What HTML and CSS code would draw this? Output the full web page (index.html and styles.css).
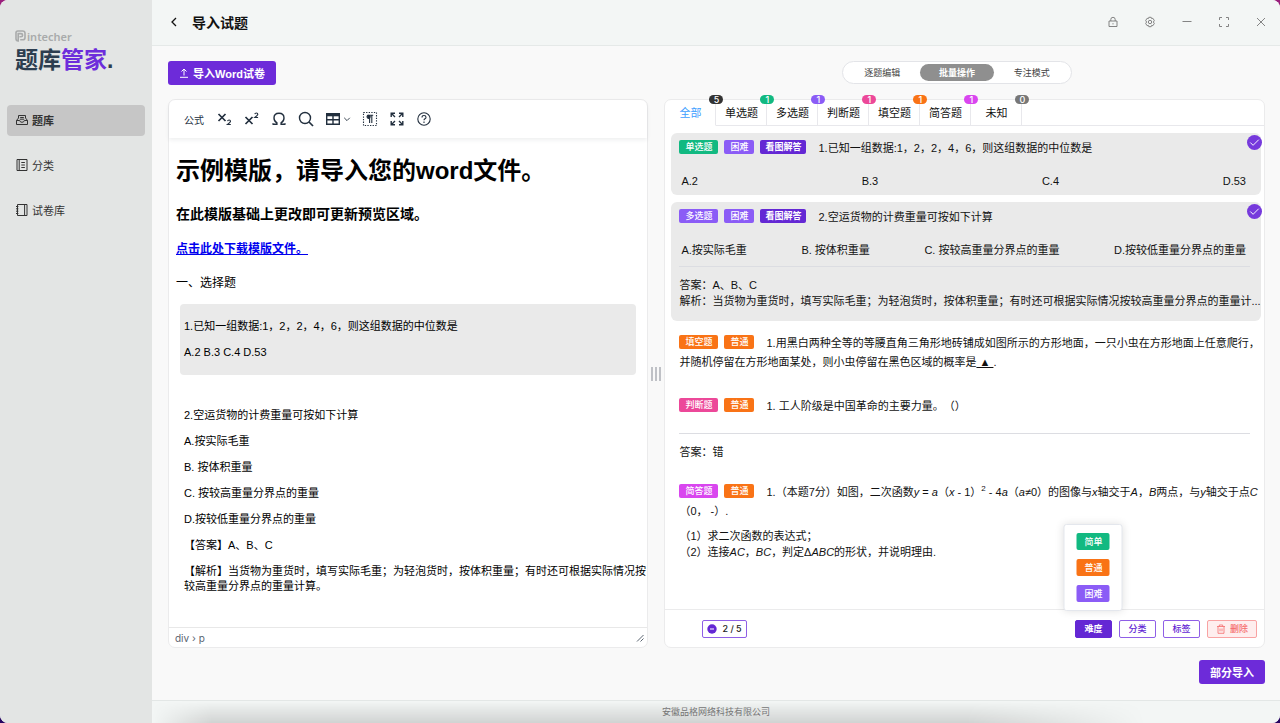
FILE: index.html
```html
<!DOCTYPE html>
<html lang="zh-CN">
<head>
  <meta charset="UTF-8" />
  <meta name="viewport" content="width=device-width, initial-scale=1" />
  <title>题库管家 - 导入试题</title>
  <link rel="stylesheet" href="styles.css">
</head>
<body>
  <div class="app">
    <aside class="sidebar">
      <div class="logo">
        <div class="logo-en">
          <svg width="11" height="12" viewBox="0 0 11 12" fill="none" stroke="currentColor"><path d="M1 3.5V2.8Q1 1 2.8 1H7.6Q10 1 10 3.2V7.4Q10 9.8 7.6 9.8H5.2M1 3.5V8.8Q1 11 3.2 11V3.6H6Q7.6 3.6 7.6 5.2Q7.6 6.8 6 6.8H4.4" stroke-width="1.6"/></svg>
          <span>intecher</span>
        </div>
        <div class="logo-cn">题库<span>管家</span>.</div>
      </div>
      <nav class="menu">
        <a href="#" class="menu-item active">
          <svg viewBox="0 0 14 14"><path d="M1.5 7.5 3.5 5V2.5h7V5l2 2.5v4h-11zM1.5 7.5h3.2q.3 1.8 2.3 1.8t2.3-1.8h3.2M5.2 4.5h3.6M4.8 6.2h4.4"/></svg>
          <span>题库</span>
        </a>
        <a href="#" class="menu-item">
          <svg viewBox="0 0 14 14"><path d="M2 1.5h10v11H2zM4.2 1.5v11M6.3 4.5h3.6M6.3 7h3.6M6.3 9.5h3.6"/></svg>
          <span>分类</span>
        </a>
        <a href="#" class="menu-item">
          <svg viewBox="0 0 14 14"><path d="M2.5 1.5h9.5v11H2.5zM9.6 1.5v11M1 3.5h2.4M1 5.8h2.4M1 8.2h2.4M1 10.5h2.4"/></svg>
          <span>试卷库</span>
        </a>
      </nav>
    </aside>

    <div class="page">
      <header class="header">
        <button class="icon-btn back" aria-label="返回"><svg width="12" height="12" viewBox="0 0 12 12"><path d="M8 2 4 6l4 4"/></svg></button>
        <h1 class="page-title">导入试题</h1>
        <div class="window-btns">
          <button class="icon-btn" aria-label="锁定"><svg width="12" height="12" viewBox="0 0 12 12"><path d="M2 5h8v5.5H2zM3.8 5V3.5a2.2 2.2 0 0 1 4.4 0V5M6 7.2v1.2"/></svg></button>
          <button class="icon-btn" aria-label="设置"><svg width="12" height="12" viewBox="0 0 12 12"><path d="M4.8 1.3h2.4l.4 1.3 1.3-.3 1.4 2.2-.9 1.5.9 1.5-1.4 2.2-1.3-.3-.4 1.3H4.8l-.4-1.3-1.3.3-1.4-2.2.9-1.5-.9-1.5 1.4-2.2 1.3.3z"/><circle cx="6" cy="6" r="1.7"/></svg></button>
          <button class="icon-btn" aria-label="最小化"><svg width="12" height="12" viewBox="0 0 12 12"><path d="M1.5 5.5h9"/></svg></button>
          <button class="icon-btn" aria-label="最大化"><svg width="12" height="12" viewBox="0 0 12 12"><path d="M1.5 4V1.5H4M8 1.5h2.5V4M10.5 8v2.5H8M4 10.5H1.5V8"/></svg></button>
          <button class="icon-btn" aria-label="关闭"><svg width="12" height="12" viewBox="0 0 12 12"><path d="m2 2 8 8M10 2l-8 8"/></svg></button>
        </div>
      </header>

      <main class="main">
        <div class="actions">
          <button class="btn-primary">
            <svg width="10" height="10" viewBox="0 0 10 10"><path d="M5 7.5V1M2.5 3.5 5 1l2.5 2.5M1 9.3h8"/></svg>
            导入Word试卷
          </button>
          <div class="segment">
            <button>逐题编辑</button>
            <button class="on">批量操作</button>
            <button>专注模式</button>
          </div>
        </div>

        <div class="panels">
          <section class="panel editor">
            <div class="editor-bar">
              <button class="formula">公式</button>
              <button aria-label="下标"><svg viewBox="0 0 16 16"><path class="thick" d="m1.5 3 7 7M8.5 3l-7 7"/><path d="M10.5 10.2q.3-1.2 1.6-1.2 1.4 0 1.4 1.2 0 1-3 3.3h3.3"/></svg></button>
              <button aria-label="上标"><svg viewBox="0 0 16 16"><path class="thick" d="m1.5 6 7 7M8.5 6l-7 7"/><path d="M10.8 3.2q.3-1.2 1.6-1.2 1.4 0 1.4 1.2 0 1-3 3.3h3.3"/></svg></button>
              <button aria-label="特殊字符"><svg viewBox="0 0 16 16"><path class="mid" d="M2 13.3h3.9v-1.5Q3 10.3 3 7q0-4.8 5-4.8T13 7q0 3.3-2.9 4.8v1.5H14M2 13.8v-1.6M14 13.8v-1.6"/></svg></button>
              <button aria-label="查找"><svg viewBox="0 0 16 16"><circle class="mid" cx="7" cy="7" r="5.5"/><path class="thick" d="m11 11 4 4"/></svg></button>
              <button class="table-btn" aria-label="表格"><svg viewBox="0 0 16 16"><path class="mid" d="M1.7 2.7h12.6v10.6H1.7zM8 4v9M2 8.7h12"/><path d="M1.5 4h13" stroke-width="2.6"/></svg><svg class="caret" viewBox="0 0 10 10"><path d="m1.5 3.5 3.5 3.5 3.5-3.5"/></svg></button>
              <button aria-label="显示块"><svg viewBox="0 0 16 16"><path d="M1.5 1.5h13v13h-13z" stroke-dasharray="1.3 1.3"/><path d="M7.6 4v8M9.8 4v8M5.4 4.3h5.8"/><circle class="solid" cx="6.6" cy="5.8" r="1.6"/></svg></button>
              <button aria-label="全屏"><svg viewBox="0 0 16 16"><path class="mid" d="M2.2 6V2.2H6M2.5 2.5 6 6M10 2.2h3.8V6M13.5 2.5 10 6M13.8 10v3.8H10M13.5 13.5 10 10M6 13.8H2.2V10M2.5 13.5 6 10"/></svg></button>
              <button aria-label="帮助"><svg viewBox="0 0 16 16"><circle cx="8" cy="8" r="6.2"/><path d="M6 6.4q0-1.9 2-1.9t2 1.7q0 1-1 1.6T8 9.3M8 10.6v1.3"/></svg></button>
            </div>
            <div class="editor-body" contenteditable="true" spellcheck="false">
              <h1>示例模版，请导入您的word文件。</h1>
              <h2>在此模版基础上更改即可更新预览区域。</h2>
              <h3><a href="#">点击此处下载模版文件。</a></h3>
              <p class="section">一、选择题</p>
              <div class="block selected">
                <p>1.已知一组数据:1，2，2，4，6，则这组数据的中位数是</p>
                <p>A.2 B.3 C.4 D.53</p>
              </div>
              <div class="block">
                <p>2.空运货物的计费重量可按如下计算</p>
                <p>A.按实际毛重</p>
                <p>B. 按体积重量</p>
                <p>C. 按较高重量分界点的重量</p>
                <p>D.按较低重量分界点的重量</p>
                <p>【答案】A、B、C</p>
                <p>【解析】当货物为重货时，填写实际毛重；为轻泡货时，按体积重量；有时还可根据实际情况按较高重量分界点的重量计算。</p>
              </div>
            </div>
            <div class="editor-status">
              <span>div › p</span>
              <svg width="8" height="8" viewBox="0 0 8 8"><path d="M1 7.5 7.5 1M4.5 7.5l3-3"/></svg>
            </div>
          </section>

          <div class="splitter"><i></i><i></i><i></i></div>

          <section class="panel preview">
            <div class="tabs">
              <button class="tab active">全部<span class="badge black">5</span></button>
              <button class="tab">单选题<span class="badge green">1</span></button>
              <button class="tab">多选题<span class="badge violet">1</span></button>
              <button class="tab">判断题<span class="badge pink">1</span></button>
              <button class="tab">填空题<span class="badge orange">1</span></button>
              <button class="tab">简答题<span class="badge fuchsia">1</span></button>
              <button class="tab">未知<span class="badge gray">0</span></button>
              <div class="tabs-rest"></div>
            </div>

            <div class="list">
              <article class="card checked">
                <div class="question"><span class="tag green">单选题</span><span class="tag violet">困难</span><button class="tag look">看图解答</button><span class="stem">1.已知一组数据:1，2，2，4，6，则这组数据的中位数是</span></div>
                <div class="options"><span>A.2</span><span>B.3</span><span>C.4</span><span>D.53</span></div>
                <span class="check"><svg viewBox="0 0 16 16"><path d="m3.5 8 3 3 6-6"/></svg></span>
              </article>

              <article class="card checked">
                <div class="question"><span class="tag violet">多选题</span><span class="tag violet">困难</span><button class="tag look">看图解答</button><span class="stem">2.空运货物的计费重量可按如下计算</span></div>
                <div class="options"><span>A.按实际毛重</span><span>B. 按体积重量</span><span>C. 按较高重量分界点的重量</span><span>D.按较低重量分界点的重量</span></div>
                <div class="answer">
                  <p>答案：A、B、C</p>
                  <p>解析：当货物为重货时，填写实际毛重；为轻泡货时，按体积重量；有时还可根据实际情况按较高重量分界点的重量计...</p>
                </div>
                <span class="check"><svg viewBox="0 0 16 16"><path d="m3.5 8 3 3 6-6"/></svg></span>
              </article>

              <article class="card">
                <div class="question"><span class="tag orange">填空题</span><span class="tag orange">普通</span><span class="stem">1.用黑白两种全等的等腰直角三角形地砖铺成如图所示的方形地面，一只小虫在方形地面上任意爬行，<br>并随机停留在方形地面某处，则小虫停留在黑色区域的概率是<u>&nbsp;▲&nbsp;</u>.</span></div>
              </article>

              <article class="card">
                <div class="question"><span class="tag pink">判断题</span><span class="tag orange">普通</span><span class="stem">1. 工人阶级是中国革命的主要力量。（）</span></div>
                <div class="answer far"><p>答案：错</p></div>
              </article>

              <article class="card">
                <div class="question"><span class="tag fuchsia">简答题</span><span class="tag orange">普通</span><span class="stem">1.（本题7分）如图，二次函数<em>y</em> = <em>a</em>（<em>x</em> - 1）<sup>2</sup> - 4<em>a</em>（<em>a</em>≠0）的图像与<em>x</em>轴交于<em>A</em>，<em>B</em>两点，与<em>y</em>轴交于点<em>C</em><br>（0， -）.</span></div>
                <div class="sub">
                  <p>（1）求二次函数的表达式；</p>
                  <p>（2）连接<em>AC</em>，<em>BC</em>，判定Δ<em>ABC</em>的形状，并说明理由.</p>
                </div>
              </article>
            </div>

            <div class="batch">
              <button class="btn-sm count"><svg width="10" height="10" viewBox="0 0 10 10"><circle cx="5" cy="5" r="4.7"/><path d="M3 5h4"/></svg>2 / 5</button>
              <div class="batch-btns">
                <div class="dropdown">
                  <button class="btn-sm solid-btn">难度</button>
                  <div class="popover">
                    <button class="green">简单</button>
                    <button class="orange">普通</button>
                    <button class="violet">困难</button>
                  </div>
                </div>
                <button class="btn-sm">分类</button>
                <button class="btn-sm">标签</button>
                <button class="btn-sm danger"><svg width="10" height="10" viewBox="0 0 10 10"><path d="M1 2.5h8M3.3 2.5V1h3.4v1.5M2 2.5v6.8h6V2.5M4 4.5v2.8M6 4.5v2.8"/></svg>删除</button>
              </div>
            </div>
          </section>
        </div>

        <button class="btn-primary submit">部分导入</button>
      </main>

      <footer class="footer">安徽品格网络科技有限公司</footer>
    </div>
  </div>
</body>
</html>
```
FILE: styles.css
```css
* {
  box-sizing: border-box;
}

html, body {
  height: 100%;
  margin: 0;
}

body {
  background: linear-gradient(#9a1f7c, #260561);
  font-family: "Liberation Sans", "Noto Sans CJK SC", sans-serif;
  font-size: 11px;
  text-spacing-trim: space-all;
  color: #111;
}

h1, h2, h3, p {
  margin: 0;
}

button {
  font: inherit;
  color: inherit;
  border: none;
  background: none;
  padding: 0;
  cursor: pointer;
}

svg {
  fill: none;
  stroke: currentColor;
  flex: none;
}

.app {
  display: flex;
  min-height: 100vh;
  border-radius: 8px;
  overflow: hidden;
  background: #f9f9f9;
}

/* sidebar */
.sidebar {
  width: 152px;
  flex: none;
  background: #e3e5e4;
  padding: 28px 7px;
}

.logo {
  padding-left: 8px;
  font-weight: 700;
}

.logo-en {
  display: flex;
  align-items: center;
  gap: 1px;
  height: 16px;
  font-family: "Noto Sans", sans-serif;
  font-size: 11px;
  font-weight: 600;
  color: #a9abab;
}

.logo-cn {
  font-size: 23px;
  line-height: 32px;
  color: #2c3e50;
}

.logo-cn span {
  color: #6d2ddb;
}

.menu {
  display: flex;
  flex-direction: column;
  gap: 14px;
  margin-top: 29px;
}

.menu-item {
  display: flex;
  align-items: center;
  gap: 3px;
  height: 31px;
  padding: 0 0 1px 8px;
  border-radius: 4px;
  color: #333;
  text-decoration: none;
}

.menu-item.active {
  background: #c6c6c6;
  font-weight: 600;
}

.menu-item svg {
  width: 14px;
  height: 14px;
}

/* page */
.page {
  flex: 1;
  min-width: 0;
  display: flex;
  flex-direction: column;
}

.header {
  display: flex;
  align-items: center;
  height: 46px;
  padding: 0 13px 1px 16px;
  background: #f3f6f5;
  border-bottom: 1px solid #e5e9e8;
}

.icon-btn {
  display: flex;
}

.back {
  color: #111;
}

.back svg {
  stroke-width: 1.3;
}

.page-title {
  margin-left: 12px;
  font-size: 14px;
  font-weight: 600;
}

.window-btns {
  display: flex;
  gap: 25px;
  margin-left: auto;
  color: #777;
}

.window-btns svg {
  stroke-width: 0.9;
}

.main {
  flex: 1;
  display: flex;
  flex-direction: column;
  padding: 15px 15px 16px 16px;
}

.actions {
  display: flex;
  justify-content: space-between;
  margin-bottom: 14px;
}

.btn-primary {
  display: flex;
  align-items: center;
  gap: 4px;
  height: 24px;
  padding: 0 11px;
  border-radius: 3px;
  background: #6d2bd9;
  color: #fff;
  font-weight: 600;
}

.segment {
  display: flex;
  width: 230px;
  height: 23px;
  padding: 2px;
  margin-right: 193px;
  border: 1px solid #e3e4e8;
  border-radius: 12px;
  background: #fff;
  font-size: 9px;
  color: #444;
}

.segment button {
  flex: 1;
  border-radius: 9px;
}

.segment .on {
  background: #8f8f8f;
  color: #fff;
  font-weight: 700;
}

.panels {
  flex: 1;
  display: grid;
  grid-template-columns: 4fr 16px 5fr;
}

.panel {
  display: flex;
  flex-direction: column;
  min-width: 0;
  border: 1px solid #ebebec;
  border-radius: 7px;
  background: #fff;
}

/* editor */
.editor-bar {
  display: flex;
  align-items: center;
  gap: 11px;
  height: 38px;
  padding: 0 15px;
  border-radius: 7px 7px 0 0;
  box-shadow: 0 2px 4px rgba(34, 47, 62, 0.08);
  color: #222f3e;
}

.editor-bar button {
  display: flex;
  align-items: center;
}

.editor-bar svg {
  width: 16px;
  height: 16px;
  stroke-width: 1.1;
}

.editor-bar .formula {
  margin-right: 2px;
  font-size: 10px;
}

.editor-bar .table-btn {
  gap: 2px;
}

.editor-bar .caret {
  width: 8px;
  height: 8px;
}

.editor-bar .thick {
  stroke-width: 1.7;
}

.editor-bar .mid {
  stroke-width: 1.4;
}

.editor-bar .solid {
  fill: currentColor;
}

.editor-body {
  flex: 1;
  padding: 15px 0 0 7px;
  line-height: 15px;
  color: #000;
  outline: none;
}

.editor-body h1 {
  font-size: 24px;
  line-height: 36px;
}

.editor-body h2 {
  margin-top: 15px;
  font-size: 14px;
  line-height: 20px;
}

.editor-body h3 {
  margin-top: 16px;
  font-size: 12px;
  line-height: 18px;
}

.editor-body a {
  color: #0000ee;
}

.editor-body .section {
  margin-top: 16px;
  font-size: 12px;
  line-height: 18px;
}

.block {
  display: flex;
  flex-direction: column;
  gap: 11px;
  padding: 15px 0 15px 8px;
}

.block.selected {
  margin: 12px 11px 18px 4px;
  padding: 15px 4px;
  border-radius: 4px;
  background: #eaeaea;
}

.editor-status {
  display: flex;
  align-items: center;
  justify-content: space-between;
  height: 20px;
  padding: 0 3px 0 6px;
  border-top: 1px solid #e8e8e8;
  font-family: Inter, sans-serif;
  font-size: 10px;
  color: #5a6470;
}

.splitter {
  display: flex;
  align-items: center;
  justify-content: center;
  gap: 2px;
}

.splitter i {
  width: 2px;
  height: 14px;
  background: #bfc1c6;
}

/* preview */
.tabs {
  display: flex;
  height: 26px;
}

.tab {
  position: relative;
  width: 51px;
  padding-bottom: 2px;
  border-right: 1px solid #e8e8ec;
  border-bottom: 1px solid #e8e8ec;
}

.tab.active {
  color: #409eff;
  border-bottom-color: transparent;
}

.tabs-rest {
  flex: 1;
  border-bottom: 1px solid #e8e8ec;
}

.badge {
  position: absolute;
  top: -5px;
  right: -8px;
  z-index: 1;
  width: 14px;
  height: 9px;
  border-radius: 5px;
  font-family: Inter, sans-serif;
  font-size: 9px;
  font-weight: 500;
  line-height: 10px;
  color: #fff;
}

.green { background: #12b981; }
.violet { background: #8b5cf6; }
.pink { background: #ec4899; }
.orange { background: #f97316; }
.fuchsia { background: #d946ef; }
.black { background: #333; }
.gray { background: #777; }

.list {
  flex: 1;
  display: flex;
  flex-direction: column;
  gap: 7px;
  padding: 7px 3px 0 6px;
}

.card {
  position: relative;
  padding: 6px 11px 12px 8px;
  border-radius: 6px;
}

.card.checked {
  background: #eaeaea;
}

.question {
  line-height: 19px;
  white-space: nowrap;
}

.tag {
  display: inline-block;
  margin-right: 6px;
  padding: 0 6px;
  border-radius: 2px;
  font-size: 9px;
  font-weight: 500;
  line-height: 14px;
  color: #fff;
  vertical-align: 2px;
}

.tag.look {
  padding: 0 5px;
  background: #6428d4;
  font-weight: 600;
}

.stem {
  margin-left: 6px;
}

.options {
  display: flex;
  justify-content: space-between;
  margin-top: 14px;
  padding: 0 4px 0 2px;
  line-height: 18px;
}

.options:nth-last-child(2) {
  margin-bottom: -7px;
}

.answer {
  margin-top: 7px;
  padding-top: 10px;
  border-top: 1px solid #dcdde2;
  line-height: 16px;
}

.answer.far {
  margin-top: 17px;
  margin-bottom: -2px;
}

.answer p {
  white-space: nowrap;
}

.sub {
  margin-top: 7px;
  line-height: 16px;
}

sup {
  font-size: 8px;
  line-height: 0;
}

.check {
  position: absolute;
  top: 2px;
  right: -1px;
  display: flex;
  width: 15px;
  height: 15px;
  border-radius: 50%;
  background: #7639dc;
  color: #fff;
}

.batch {
  display: flex;
  align-items: center;
  justify-content: space-between;
  height: 38px;
  padding: 0 7px 0 37px;
  border-top: 1px solid #ebebec;
}

.batch-btns {
  display: flex;
  gap: 7px;
}

.btn-sm {
  display: flex;
  align-items: center;
  justify-content: center;
  gap: 4px;
  height: 18px;
  padding: 0 8px;
  min-width: 37px;
  border: 1px solid #8f5fe6;
  border-radius: 2px;
  background: #fff;
  color: #6428d4;
  font-size: 9px;
  font-weight: 500;
}

.btn-sm.count {
  gap: 5px;
  padding: 0 4px;
  font-family: Inter, sans-serif;
  color: #222;
}

.count circle {
  fill: #6428d4;
  stroke: none;
}

.count path {
  stroke: #fff;
}

.btn-sm.solid-btn {
  background: #6428d4;
  border-color: #6428d4;
  color: #fff;
  font-weight: 700;
}

.btn-sm.danger {
  border-color: #f9a3a3;
  background: #feeeee;
  color: #f56c6c;
}

.danger svg {
  stroke-width: 0.8;
}

.dropdown {
  position: relative;
}

.popover {
  position: absolute;
  bottom: calc(100% + 9px);
  left: 50%;
  transform: translateX(-50%);
  display: flex;
  flex-direction: column;
  gap: 9px;
  padding: 8px 12px;
  border: 1px solid #e4e7ed;
  border-radius: 3px;
  background: #fff;
  box-shadow: 0 0 8px rgba(0, 0, 0, 0.12);
}

.popover button {
  width: 33px;
  height: 17px;
  border-radius: 2px;
  color: #fff;
  font-size: 9px;
  font-weight: 500;
}

.submit {
  align-self: flex-end;
  margin-top: 12px;
}

.footer {
  position: relative;
  height: 23px;
  border-top: 1px solid #e3e7e6;
  background: #f3f6f5;
  font-size: 9px;
  line-height: 22px;
  text-align: center;
  color: #808080;
}

/* soft shade along the bottom edge */
.footer::after {
  content: "";
  position: absolute;
  inset: 0 12% 0 0;
  background: linear-gradient(transparent, rgba(0, 0, 0, 0.14));
  mask-image: linear-gradient(to right, transparent, #000 6%, #000 82%, transparent);
}
```
